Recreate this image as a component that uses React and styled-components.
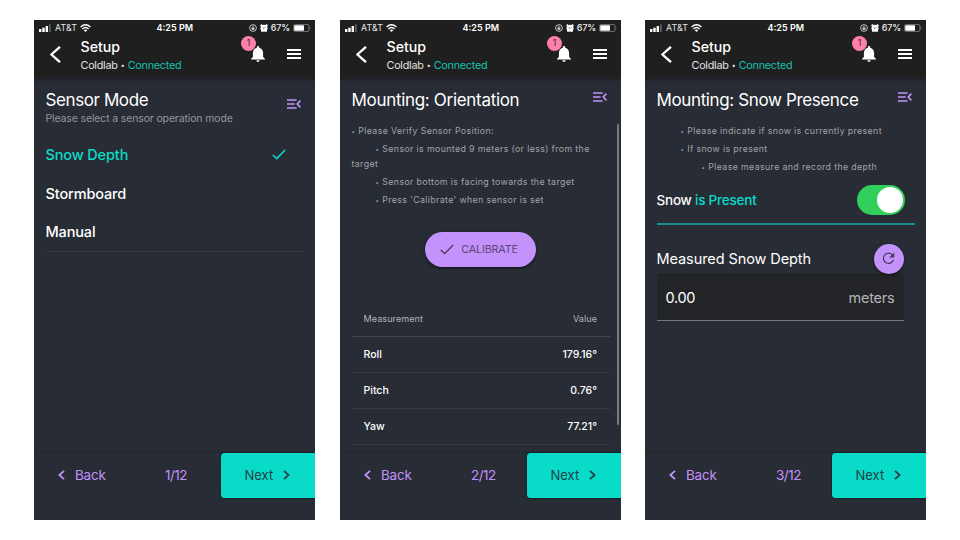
import React from "react";
import styled, { createGlobalStyle } from "styled-components";

const GlobalStyle = createGlobalStyle`
  * { box-sizing: border-box; }
  body { margin: 0; background: #fff; font-family: Inter, "Liberation Sans", sans-serif; }
`;

const teal = "#08dcc8";
const purple = "#c492fb";

const Page = styled.main`
  width: 960px;
  height: 540px;
  padding: 20px 34px;
  display: grid;
  grid-template-columns: 306px 305px 281px;
  overflow: hidden;
`;

const Phone = styled.section`
  width: 281px;
  height: 500px;
  display: flex;
  flex-direction: column;
  background: #282c35;
  color: #fff;
  overflow: hidden;
`;

const Label = styled.span`
  font-size: ${(p) => p.$size}px;
  font-weight: ${(p) => p.$weight || 400};
  letter-spacing: ${(p) => p.$track || 0}px;
  line-height: ${(p) => p.$line || 16}px;
  color: ${(p) => p.$color || "#fff"};
  white-space: pre;
`;

const Top = styled.header`
  height: 58px;
  flex: none;
  background: #1f1f1f;
  box-shadow: 0 1px 4px rgba(0, 0, 0, 0.45);
`;

const StatusBar = styled.div`
  height: 15px;
  display: grid;
  grid-template-columns: 1fr auto 1fr;
  align-items: center;
  padding: 1px 4px 0 4.5px;
`;

const StatusSide = styled.div`
  display: flex;
  align-items: center;
  gap: ${(p) => p.$gap}px;
  justify-content: ${(p) => (p.$end ? "flex-end" : "flex-start")};
  svg { flex: none; }
`;

const AppBar = styled.div`
  height: 43px;
  display: flex;
  align-items: flex-start;
  padding: 3px 14px 0 16px;
`;

const BackArrow = styled.div`
  width: 30.5px;
  padding-top: 7.5px;
  svg { display: block; }
`;

const Heading = styled.div`
  flex: 1;
  display: flex;
  flex-direction: column;
  gap: 0.8px;
`;

const SmallDot = styled.span`
  display: inline-block;
  width: 10px;
  text-align: center;
  font-size: 7px;
  line-height: 8px;
  vertical-align: 1px;
`;

const Bell = styled.div`
  position: relative;
  margin: 8px 22px 0 0;
  svg { display: block; }
`;

const Badge = styled.span`
  position: absolute;
  left: -10px;
  top: -10px;
  width: 15px;
  height: 15px;
  border-radius: 50%;
  background: #ff7fab;
  color: #3a2029;
  font-size: 8.5px;
  line-height: 15px;
  text-align: center;
`;

const Burger = styled.div`
  width: 14px;
  margin-top: 11px;
  display: grid;
  gap: 2px;
`;

const BurgerLine = styled.i`
  height: 2px;
  background: #fff;
`;

const Body = styled.div`
  flex: 1;
  min-height: 0;
  display: flex;
  flex-direction: column;
  padding: 12px 11px 0 11.5px;
  position: relative;
`;

const TitleRow = styled.div`
  display: flex;
  justify-content: space-between;
  padding-right: 3.5px;
  height: ${(p) => p.$h}px;
  svg { display: block; margin-top: ${(p) => p.$iconTop}px; }
`;

const TitleBlock = styled.div`
  display: flex;
  flex-direction: column;
`;

const Options = styled.div`
  border-bottom: 1px solid #363a43;
  height: 116.5px;
`;

const Option = styled.div`
  height: 38.8px;
  display: flex;
  align-items: center;
  justify-content: space-between;
  padding-right: 18.5px;
`;

const Notes = styled.div`
  display: flex;
  flex-direction: column;
  gap: 3px;
  margin-top: -0.5px;
`;

const Note = styled.p`
  margin: 0;
  text-indent: ${(p) => p.$indent || 0}px;
  font-size: 8.8px;
  line-height: 15px;
  letter-spacing: 0.37px;
  color: #a1a3a8;
`;

const Dot = styled.span`
  display: inline-block;
  width: 6.8px;
  text-indent: 0;
  font-size: 6px;
  line-height: 7px;
  letter-spacing: 0;
`;

const Calibrate = styled.button`
  align-self: center;
  flex: none;
  width: 111px;
  height: 35.5px;
  margin: 24.5px 0 0;
  padding: 1px 0 0 15px;
  border: 0;
  border-radius: 18px;
  background: ${purple};
  box-shadow: 0 1px 3px rgba(0, 0, 0, 0.65);
  display: flex;
  align-items: center;
  gap: 7px;
  font-family: inherit;
`;

const Table = styled.div`
  margin-top: 34px;
`;

const TableRow = styled.div`
  height: 36px;
  padding: 0 13px 0 12px;
  display: flex;
  align-items: center;
  justify-content: space-between;
  border-bottom: 1px solid ${(p) => (p.$head ? "#42464e" : "#373b43")};
`;

const ScrollThumb = styled.div`
  position: absolute;
  right: 2.5px;
  top: 46px;
  width: 2px;
  height: 301px;
  border-radius: 1px;
  background: #777a80;
`;

const SwitchRow = styled.div`
  display: flex;
  align-items: center;
  justify-content: space-between;
  height: 50px;
  margin-top: 1px;
  padding: 2px 10px 0 0;
  border-bottom: 2px solid #1a8f87;
`;

const Switch = styled.div`
  width: 48px;
  height: 30px;
  padding: 2px;
  border-radius: 15px;
  background: #32d05a;
  display: flex;
  justify-content: flex-end;
`;

const Knob = styled.i`
  width: 26px;
  height: 26px;
  border-radius: 50%;
  background: #fff;
`;

const DepthHead = styled.div`
  display: flex;
  align-items: center;
  justify-content: space-between;
  height: 30px;
  margin-top: 18.5px;
  padding-right: 11.5px;
`;

const Refresh = styled.div`
  width: 30px;
  height: 30px;
  border-radius: 50%;
  background: ${purple};
  box-shadow: 0 1px 3px rgba(0, 0, 0, 0.6);
  display: grid;
  place-items: center;
  z-index: 1;
`;

const Field = styled.div`
  height: 48px;
  margin: -0.5px 11.5px 0 0;
  padding: 3px 9px 0;
  border-radius: 3px 3px 0 0;
  border-bottom: 1px solid #77787b;
  background: #232427;
  display: flex;
  align-items: center;
  justify-content: space-between;
`;

const Footer = styled.footer`
  height: 68px;
  flex: none;
  border-top: 1px solid #22252c;
  display: grid;
  grid-template-columns: 131px 1fr 94px;
  align-items: start;
  line-height: 0;
`;

const BackButton = styled.div`
  height: 44px;
  padding-left: 24px;
  display: flex;
  align-items: center;
  gap: 10px;
`;

const Step = styled.div`
  height: 44px;
  display: flex;
  align-items: center;
`;

const NextButton = styled.div`
  height: 44.5px;
  padding-left: 23.5px;
  border-radius: 3.5px 0 0 3.5px;
  background: ${teal};
  box-shadow: 0 0 2px rgba(0, 0, 0, 0.8);
  display: flex;
  align-items: center;
  gap: 10px;
`;

const Chevron = ({ w, h, stroke, color, right }) => (
  <svg width={w} height={h} viewBox={`0 0 ${w} ${h}`} fill="none" stroke={color} strokeWidth={stroke}>
    <path d={right ? `M1 .8L${w - 1.4} ${h / 2}L1 ${h - 0.8}` : `M${w - 1} .8L1.4 ${h / 2}L${w - 1} ${h - 0.8}`} />
  </svg>
);

const Check = ({ color, stroke = 1.5 }) => (
  <svg width="14" height="11" viewBox="0 0 14 11" fill="none" stroke={color} strokeWidth={stroke}>
    <path d="M.8 6L4.7 9.6L13.1 1" />
  </svg>
);

const MenuOpen = () => (
  <svg width="14" height="10" viewBox="0 0 14 10" fill="none" stroke={purple} strokeWidth="1.6">
    <path d="M0 1H9.6M0 5H7.6M0 9H9.6M13.4 1.6L10.2 5L13.4 8.4" />
  </svg>
);

const Signal = () => (
  <svg width="13" height="8" viewBox="0 0 13 8">
    <path d="M0 5h2.400v3H0zM3.300 3.800h2.400V8H3.300zM6.600 2h2.400v6H6.600z" fill="#fff" />
    <path d="M10 .3h1.600V8H10z" fill="#666" />
  </svg>
);

const Wifi = () => (
  <svg width="11" height="8" viewBox="0 0 11 8" fill="none" stroke="#fff" strokeWidth="1.4">
    <path d="M.6 3Q5.5-1.5 10.4 3M2.4 4.9Q5.5 2.1 8.6 4.9" />
    <path d="M3.6 6.1Q5.5 4.7 7.4 6.1L5.5 8z" fill="#fff" stroke="none" />
  </svg>
);

const RotationLock = () => (
  <svg width="8" height="8" viewBox="0 0 8 8" fill="none" stroke="#e4e4e4">
    <circle cx="4" cy="4" r="3.4" strokeWidth=".8" />
    <path d="M3.2 4V3a.8.8 0 0 1 1.600 0v1" strokeWidth=".6" />
    <path d="M2.600 3.900h2.800v1.800H2.600z" fill="#e4e4e4" stroke="none" />
  </svg>
);

const Alarm = () => (
  <svg width="8" height="8" viewBox="0 0 8 8">
    <circle cx="4" cy="4.2" r="3.500" fill="#fff" />
    <path d="M.5 2L2 .5M7.500 2L6 .5M1.400 7.600L2.500 6.500M6.600 7.600L5.500 6.500" stroke="#fff" strokeWidth="1.500" />
    <path d="M2.700 3.500L4 4.600L5.300 3.300" fill="none" stroke="#1f1f1f" strokeWidth=".6" />
  </svg>
);

const Battery = () => (
  <svg width="18" height="8" viewBox="0 0 18 8">
    <rect x=".4" y=".4" width="15.600" height="7.200" rx="2" fill="none" stroke="#8a8a8a" strokeWidth=".8" />
    <rect x="1.200" y="1.200" width="9.800" height="5.600" rx=".9" fill="#fff" />
    <path d="M16.800 2.600Q18 4 16.800 5.400z" fill="#8a8a8a" />
  </svg>
);

const BellIcon = () => (
  <svg width="14" height="16" viewBox="0 0 14 16" fill="#fff">
    <path d="M7 0a1.200 1.200 0 0 1 1.200 1.200v.5C10.800 2.300 12.100 4.400 12.100 7v3.900L13.900 12.700V13.600H.1V12.700L1.900 10.900V7c0-2.600 1.300-4.700 3.900-5.300v-.5A1.200 1.200 0 0 1 7 0zM5.400 14.300h3.200a1.600 1.600 0 0 1-3.200 0z" />
  </svg>
);

const RefreshIcon = () => (
  <svg width="13" height="13" viewBox="0 0 13 13">
    <path d="M10.300 2.800A5.100 5.100 0 1 0 11.400 8" fill="none" stroke="#493b5d" strokeWidth="1.3" />
    <path d="M12.200.6V5.600H7.200z" fill="#493b5d" />
  </svg>
);

const AppHeader = () => (
  <Top>
    <StatusBar>
      <StatusSide $gap={3.5}>
        <Signal />
        <Label $size={8.8} $track={0.1} $line={10} $color="#e6e6e6">AT&amp;T</Label>
        <Wifi />
      </StatusSide>
      <Label $size={9} $weight={600} $line={10}>4:25 PM</Label>
      <StatusSide $gap={3} $end>
        <RotationLock />
        <Alarm />
        <Label $size={9} $weight={500} $track={-0.15} $line={10} $color="#eee">67%</Label>
        <Battery />
      </StatusSide>
    </StatusBar>
    <AppBar>
      <BackArrow><Chevron w={11} h={17} stroke={2.3} color="#fff" /></BackArrow>
      <Heading>
        <Label $size={14.2} $weight={500} $line={18}>Setup</Label>
        <Label $size={10.8} $track={-0.25} $line={18} $color="#e3e3e3">
          Coldlab<SmallDot>•</SmallDot>
          <Label $size={10.8} $track={-0.25} $line={18} $color="#12c3ae">Connected</Label>
        </Label>
      </Heading>
      <Bell><BellIcon /><Badge>1</Badge></Bell>
      <Burger><BurgerLine /><BurgerLine /><BurgerLine /></Burger>
    </AppBar>
  </Top>
);

const AppFooter = ({ step }) => (
  <Footer>
    <BackButton>
      <Chevron w={7} h={10} stroke={1.8} color={purple} />
      <Label $size={13.4} $track={-0.15} $color={purple}>Back</Label>
    </BackButton>
    <Step><Label $size={13.5} $track={-0.5} $color={purple}>{step}</Label></Step>
    <NextButton>
      <Label $size={13} $color="#24414a">Next</Label>
      <Chevron w={7} h={10} stroke={1.8} color="#24414a" right />
    </NextButton>
  </Footer>
);

const modes = ["Snow Depth", "Stormboard", "Manual"];
const readings = [["Roll", "179.16°"], ["Pitch", "0.76°"], ["Yaw", "77.21°"]];

export default function App() {
  return (
    <>
      <GlobalStyle />
      <Page>
        <Phone>
          <AppHeader />
          <Body>
            <TitleRow $h={45.5} $iconTop={8.5}>
              <TitleBlock>
                <Label $size={17} $track={-0.4} $line={21}>Sensor Mode</Label>
                <Label $size={10.5} $track={-0.14} $line={15} $color="#94969b">Please select a sensor operation mode</Label>
              </TitleBlock>
              <MenuOpen />
            </TitleRow>
            <Options>
              {modes.map((m, i) => (
                <Option key={m}>
                  <Label $size={14.5} $weight={500} $track={-0.14} $color={i ? "#fff" : teal}>{m}</Label>
                  {i === 0 && <Check color={teal} />}
                </Option>
              ))}
            </Options>
          </Body>
          <AppFooter step="1/12" />
        </Phone>

        <Phone>
          <AppHeader />
          <Body>
            <TitleRow $h={33.5} $iconTop={2}>
              <Label $size={17} $track={-0.31} $line={21}>Mounting: Orientation</Label>
              <MenuOpen />
            </TitleRow>
            <Notes>
              <Note><Dot>•</Dot>Please Verify Sensor Position:</Note>
              <Note $indent={24}><Dot>•</Dot>Sensor is mounted 9 meters (or less) from the target</Note>
              <Note $indent={24}><Dot>•</Dot>Sensor bottom is facing towards the target</Note>
              <Note $indent={24}><Dot>•</Dot>Press 'Calibrate' when sensor is set</Note>
            </Notes>
            <Calibrate>
              <Check color="#493b5d" stroke={1.3} />
              <Label $size={10.8} $track={-0.18} $color="#5b4677">CALIBRATE</Label>
            </Calibrate>
            <Table>
              <TableRow $head>
                <Label $size={9} $track={0.1} $color="#b3b5b9">Measurement</Label>
                <Label $size={9} $track={0.1} $color="#b3b5b9">Value</Label>
              </TableRow>
              {readings.map(([name, value]) => (
                <TableRow key={name}>
                  <Label $size={10.5} $weight={500}>{name}</Label>
                  <Label $size={10.5} $weight={500}>{value}</Label>
                </TableRow>
              ))}
            </Table>
            <ScrollThumb />
          </Body>
          <AppFooter step="2/12" />
        </Phone>

        <Phone>
          <AppHeader />
          <Body>
            <TitleRow $h={33.5} $iconTop={2}>
              <Label $size={17} $track={-0.37} $line={21}>Mounting: Snow Presence</Label>
              <MenuOpen />
            </TitleRow>
            <Notes>
              <Note $indent={24}><Dot>•</Dot>Please indicate if snow is currently present</Note>
              <Note $indent={24}><Dot>•</Dot>If snow is present</Note>
              <Note $indent={45}><Dot>•</Dot>Please measure and record the depth</Note>
            </Notes>
            <SwitchRow>
              <Label $size={13.5} $weight={500} $track={-0.22}>
                Snow <Label $size={13.5} $weight={500} $track={-0.22} $color={teal}>is Present</Label>
              </Label>
              <Switch><Knob /></Switch>
            </SwitchRow>
            <DepthHead>
              <Label $size={14.5} $track={-0.08}>Measured Snow Depth</Label>
              <Refresh><RefreshIcon /></Refresh>
            </DepthHead>
            <Field>
              <Label $size={14.5} $track={-0.35}>0.00</Label>
              <Label $size={14.5} $track={-0.2} $color="#b5b5b7">meters</Label>
            </Field>
          </Body>
          <AppFooter step="3/12" />
        </Phone>
      </Page>
    </>
  );
}
